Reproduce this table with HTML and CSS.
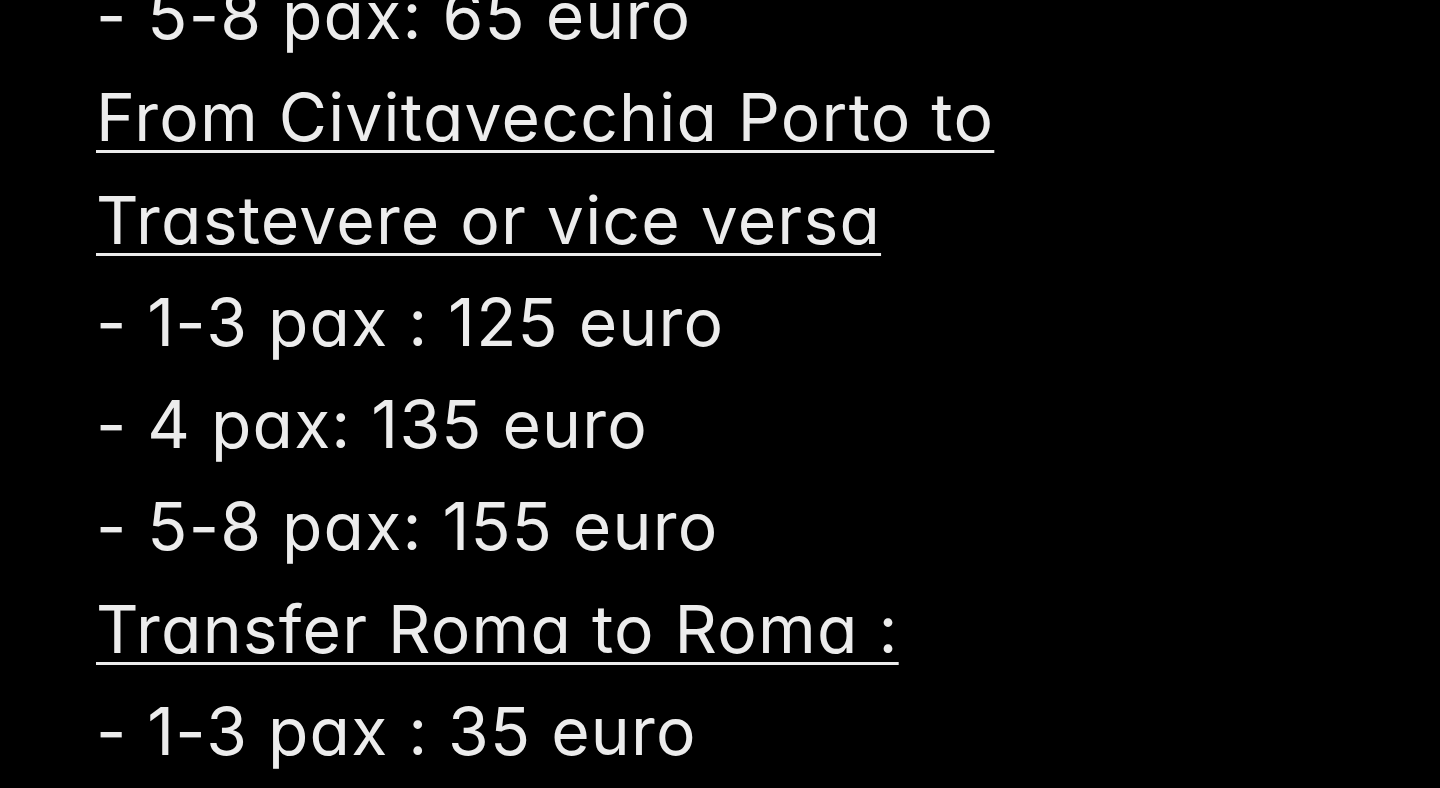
FILE: index.html
```html
<!DOCTYPE html>
<html lang="en">
<head>
<meta charset="utf-8">
<title>Transfer prices</title>
<link rel="stylesheet" href="styles.css">
</head>
<body>
<main class="prices">
  <p class="line">- 5-8 pax: 65 euro</p>
  <p class="line heading"><span>From Civitavecchia Porto to</span></p>
  <p class="line heading"><span>Trastevere or vice versa</span></p>
  <p class="line">- 1-3 pax : 125 euro</p>
  <p class="line">- 4 pax: 135 euro</p>
  <p class="line">- 5-8 pax: 155 euro</p>
  <p class="line heading"><span>Transfer Roma to Roma :</span></p>
  <p class="line">- 1-3 pax : 35 euro</p>
</main>
</body>
</html>
```
FILE: styles.css
```css
html, body {
  margin: 0;
  padding: 0;
  background: #000;
  height: 100%;
  overflow: hidden;
}
.prices {
  margin-top: -36px;
  padding-left: 96px;
  display: flex;
  flex-direction: column;
  font-family: Inter, "Liberation Sans", sans-serif;
  font-feature-settings: "cv11" 1;
  font-weight: 380;
  font-size: 66px;
  line-height: 102.3px;
  letter-spacing: 1.2px;
  color: #ececec;
}
.line {
  margin: 0;
  white-space: nowrap;
}
.heading span {
  text-decoration: underline;
  text-decoration-thickness: 3px;
  text-underline-offset: 9px;
}
```
